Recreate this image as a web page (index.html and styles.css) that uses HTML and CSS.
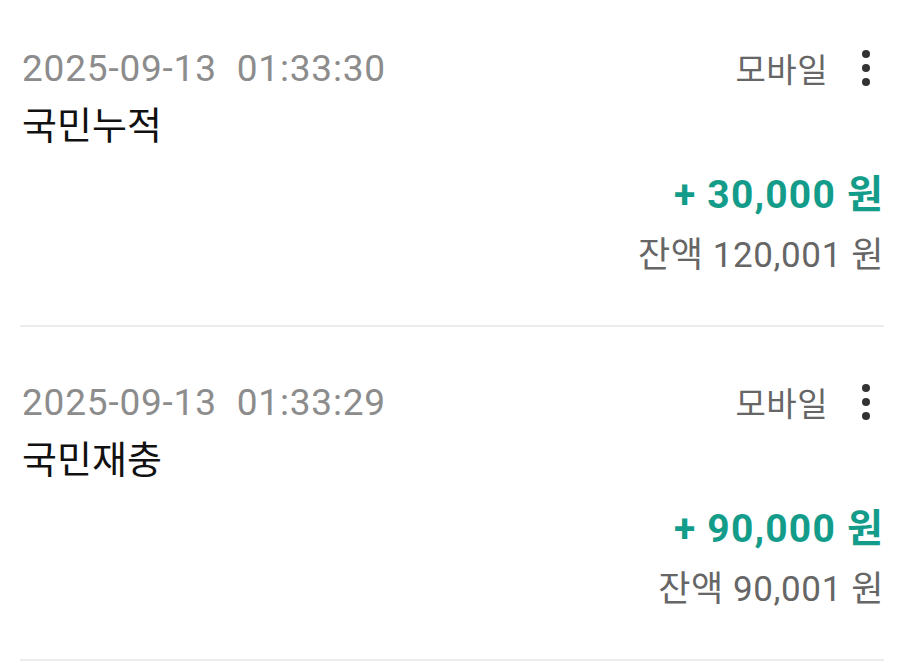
FILE: index.html
```html
<!DOCTYPE html>
<html lang="ko">
<head>
<meta charset="utf-8">
<link rel="stylesheet" href="styles.css">
</head>
<body>
<ul class="list">
  <li class="item">
    <div class="head">
      <span class="date">2025-09-13&nbsp;&nbsp;01:33:30</span>
      <div class="side">
        <span class="channel">모바일</span>
        <svg class="kebab" width="12" height="40" viewBox="0 0 12 40"><circle cx="6" cy="6" r="4"/><circle cx="6" cy="20" r="4"/><circle cx="6" cy="34" r="4"/></svg>
      </div>
    </div>
    <div class="title">국민누적</div>
    <div class="amounts">
      <div class="amount">+ 30,000 원</div>
      <div class="balance">잔액 120,001 원</div>
    </div>
  </li>
  <li class="item">
    <div class="head">
      <span class="date">2025-09-13&nbsp;&nbsp;01:33:29</span>
      <div class="side">
        <span class="channel">모바일</span>
        <svg class="kebab" width="12" height="40" viewBox="0 0 12 40"><circle cx="6" cy="6" r="4"/><circle cx="6" cy="20" r="4"/><circle cx="6" cy="34" r="4"/></svg>
      </div>
    </div>
    <div class="title">국민재충</div>
    <div class="amounts">
      <div class="amount">+ 90,000 원</div>
      <div class="balance">잔액 90,001 원</div>
    </div>
  </li>
</ul>
</body>
</html>
```
FILE: styles.css
```css
* { box-sizing: border-box; }
html, body { margin: 0; padding: 0; background: #fff; }
body {
  font-family: Roboto, "Noto Sans CJK KR", sans-serif;
  width: 904px;
  height: 666px;
  overflow: hidden;
}
.list {
  list-style: none;
  margin: 0;
  padding: 0 20px;
}
.item {
  padding: 51px 0 45px 2px;
  border-bottom: 2px solid #ececec;
}
.item:first-child {
  padding-top: 44px;
}
.head {
  display: flex;
  justify-content: space-between;
  align-items: center;
  height: 48px;
}
.date {
  font-size: 37px;
  color: #8c8c8c;
  letter-spacing: 0.8px;
}
.side {
  display: flex;
  align-items: center;
  gap: 32px;
  margin-right: 12px;
}
.channel {
  font-size: 33px;
  color: #666;
  letter-spacing: 0.5px;
}
.kebab { fill: #333; display: block; }
.title {
  font-size: 38px;
  color: #111;
  line-height: 50px;
  margin-top: 9px;
}
.amounts {
  text-align: right;
  margin-top: 20px;
}
.amount {
  font-size: 39px;
  font-weight: 700;
  color: #139c89;
  line-height: 48px;
  letter-spacing: 1.2px;
}
.balance {
  font-size: 35px;
  color: #666;
  line-height: 48px;
  margin-top: 13px;
  letter-spacing: 0.6px;
}
```
